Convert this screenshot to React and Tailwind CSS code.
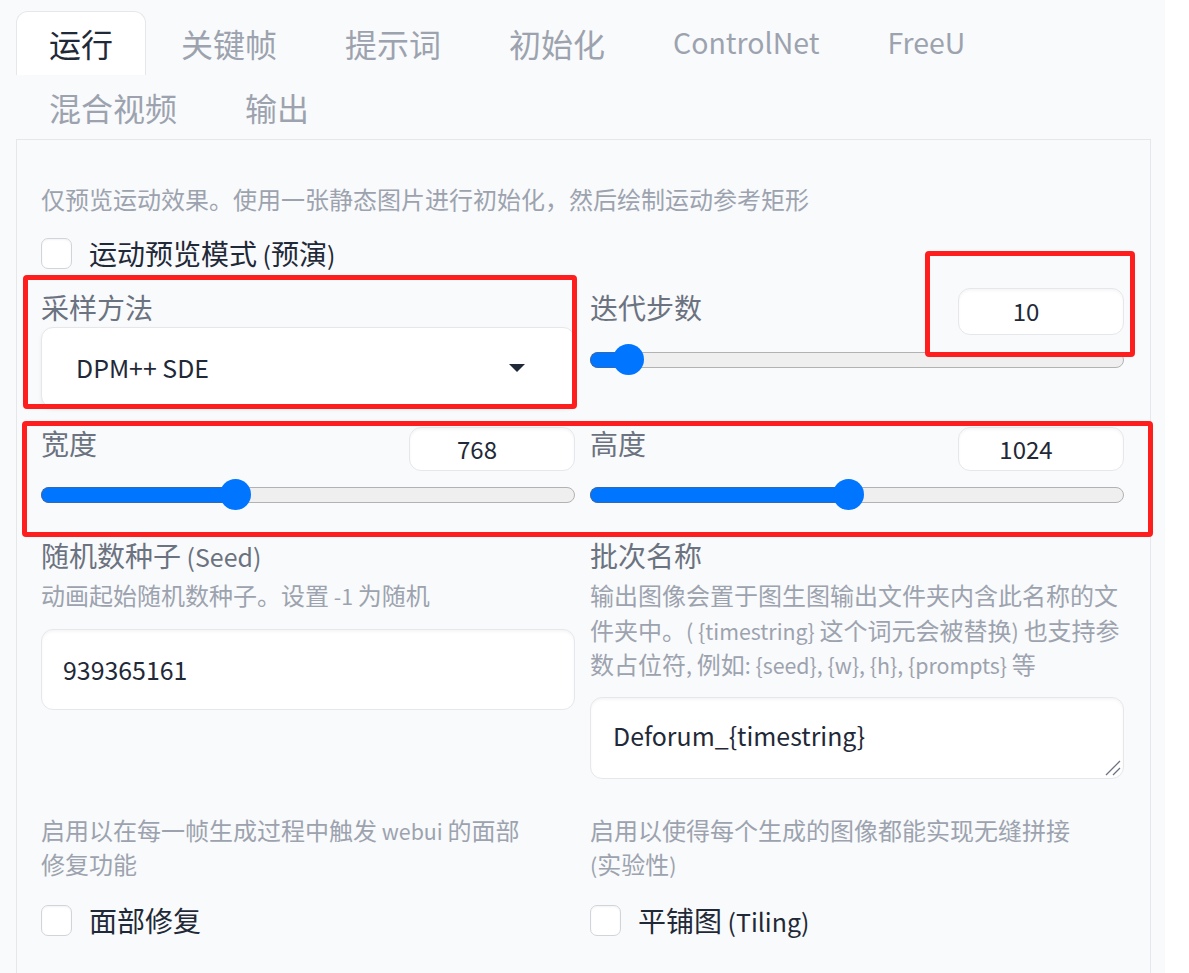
const tabs = ["运行", "关键帧", "提示词", "初始化", "ControlNet", "FreeU", "混合视频", "输出"];

// latin glyphs in Noto Sans CJK run wider than the reference, scale them down
function L({ children }) {
  return <span className="text-[0.89em] leading-none">{children}</span>;
}

function Checkbox() {
  return (
    <div className="h-[31px] w-[31px] shrink-0 rounded-[7px] border border-[#d1d5db] bg-white shadow-[inset_0_1px_2px_rgba(0,0,0,0.05)]" />
  );
}

function NumberBox({ value, h }) {
  return (
    <div
      className={`flex w-[166px] items-center justify-center rounded-[12px] border border-[#e5e7eb] bg-white pr-[30px] text-[27px] text-[#1f2937] shadow-[inset_0_2px_3px_rgba(0,0,0,0.04)] ${h}`}
    >
      <L>{value}</L>
    </div>
  );
}

function Slider({ pct }) {
  return (
    <div className="relative h-[31px]">
      <div className="absolute inset-x-0 top-[7.5px] h-[16px] rounded-full border-[1.5px] border-[#b2b2b2] bg-[#efefef]" />
      <div
        className="absolute left-0 top-[7.5px] h-[16px] rounded-l-full border-[1.5px] border-r-0 border-[#3169b5] bg-[#0075ff]"
        style={{ width: `calc(${pct} * (100% - 31px) + 15px)` }}
      />
      <div
        className="absolute top-0 h-[31px] w-[31px] rounded-full bg-[#0075ff]"
        style={{ left: `calc(${pct} * (100% - 31px))` }}
      />
    </div>
  );
}

export default function App() {
  return (
    <div className="flex min-h-[973px] bg-white font-['Noto_Sans_CJK_SC','Noto_Sans',sans-serif]">
      <div className="relative w-[1165px] bg-[#f9fafb] pl-[16px] pr-[14px] pt-[11px]">
        {/* tabs */}
        <div className="flex flex-wrap gap-x-[2px]">
          {tabs.map((t, i) => (
            <div
              key={t}
              className={
                i === 0
                  ? "flex h-[64px] items-center rounded-t-[12px] border border-b-0 border-[#e5e7eb] bg-white px-[32px] pb-[2px] text-[32px] leading-none text-[#1f2937]"
                  : "flex h-[64px] items-center border border-b-0 border-transparent px-[32px] pb-[2px] text-[32px] leading-none text-[#9ca3af]"
              }
            >
              {/^[A-Za-z]/.test(t) ? <L>{t}</L> : t}
            </div>
          ))}
        </div>

        {/* panel */}
        <div className="border border-[#e5e7eb] pb-[60px] pl-[24px] pr-[26px] pt-[42px]">
          <p className="text-[24px] leading-[34px] text-[#9ca3af]">
            仅预览运动效果。使用一张静态图片进行初始化，然后绘制运动参考矩形
          </p>

          <div className="mt-[22px] flex items-center gap-[17px]">
            <Checkbox />
            <span className="text-[28px] leading-[31px] text-[#1f2937]">
              运动预览模式<L> (</L>预演<L>)</L>
            </span>
          </div>

          {/* sampler / steps */}
          <div className="mt-[19px] grid grid-cols-2 items-start gap-x-[15px]">
            <div>
              <div className="text-[28px] leading-[38px] text-[#6b7280]">采样方法</div>
              <div className="mt-[1px] flex h-[81px] items-center justify-between rounded-[12px] border border-[#e5e7eb] bg-white pl-[34px] pr-[49px] text-[28px] text-[#1f2937] shadow-[0_2px_4px_rgba(0,0,0,0.06)]">
                <L>DPM++ SDE</L>
                <svg width="16" height="8" viewBox="0 0 16 8">
                  <path d="M0 0 L16 0 L8 8 Z" fill="#1f2937" />
                </svg>
              </div>
            </div>
            <div>
              <div className="flex items-start justify-between">
                <span className="text-[28px] leading-[38px] text-[#6b7280]">迭代步数</span>
                <NumberBox value="10" h="h-[47px]" />
              </div>
              <div className="mt-[9px]">
                <Slider pct={0.045} />
              </div>
            </div>
          </div>

          {/* width / height */}
          <div className="mt-[19px] grid grid-cols-2 items-start gap-x-[15px]">
            <div>
              <div className="flex items-start justify-between">
                <span className="text-[28px] leading-[32px] text-[#6b7280]">宽度</span>
                <NumberBox value="768" h="h-[44px]" />
              </div>
              <div className="mt-[8px]">
                <Slider pct={0.355} />
              </div>
            </div>
            <div>
              <div className="flex items-start justify-between">
                <span className="text-[28px] leading-[32px] text-[#6b7280]">高度</span>
                <NumberBox value="1024" h="h-[44px]" />
              </div>
              <div className="mt-[8px]">
                <Slider pct={0.484} />
              </div>
            </div>
          </div>

          {/* seed / batch name */}
          <div className="mt-[27px] grid grid-cols-2 items-start gap-x-[15px]">
            <div>
              <div className="text-[28px] leading-[36px] text-[#6b7280]">
                随机数种子<L> (Seed)</L>
              </div>
              <p className="mt-[5px] text-[24px] leading-[34.5px] text-[#9ca3af]">
                动画起始随机数种子。设置<L> -1 </L>为随机
              </p>
              <div className="mt-[16px] flex h-[81px] items-center rounded-[12px] border border-[#e5e7eb] bg-white pl-[21px] text-[28px] text-[#1f2937] shadow-[inset_0_2px_3px_rgba(0,0,0,0.04)]">
                <L>939365161</L>
              </div>
            </div>
            <div>
              <div className="text-[28px] leading-[36px] text-[#6b7280]">批次名称</div>
              <p className="mt-[5px] whitespace-nowrap text-[24px] leading-[34.5px] text-[#9ca3af]">
                输出图像会置于图生图输出文件夹内含此名称的文
                <br />
                件夹中。<L>( {"{timestring}"} </L>这个词元会被替换<L>) </L>也支持参
                <br />
                数占位符<L>, </L>例如<L>: {"{seed}, {w}, {h}, {prompts}"} </L>等
              </p>
              <div className="relative mt-[15px] flex h-[82px] items-center rounded-[12px] border border-[#e5e7eb] bg-white pb-[4px] pl-[22px] text-[28px] text-[#1f2937] shadow-[inset_0_2px_3px_rgba(0,0,0,0.04)]">
                <L>Deforum_{"{timestring}"}</L>
                <svg className="absolute bottom-[2px] right-[2px]" width="16" height="16" viewBox="0 0 16 16">
                  <path d="M1 15 L15 1 M8 15 L15 8" stroke="#6b7280" strokeWidth="1.3" />
                </svg>
              </div>
            </div>
          </div>

          {/* face restore / tiling */}
          <div className="mt-[34px] grid grid-cols-2 items-start gap-x-[15px]">
            <div>
              <p className="text-[24px] leading-[34px] text-[#9ca3af]">
                启用以在每一帧生成过程中触发<L> webui </L>的面部
                <br />
                修复功能
              </p>
              <div className="mt-[24px] flex items-center gap-[17px]">
                <Checkbox />
                <span className="text-[28px] leading-[31px] text-[#1f2937]">面部修复</span>
              </div>
            </div>
            <div>
              <p className="text-[24px] leading-[34px] text-[#9ca3af]">
                启用以使得每个生成的图像都能实现无缝拼接
                <br />
                <L>(</L>实验性<L>)</L>
              </p>
              <div className="mt-[24px] flex items-center gap-[17px]">
                <Checkbox />
                <span className="text-[28px] leading-[31px] text-[#1f2937]">
                  平铺图<L> (Tiling)</L>
                </span>
              </div>
            </div>
          </div>
        </div>

        {/* red annotation boxes */}
        <div className="pointer-events-none absolute left-[23px] top-[275px] h-[134px] w-[554px] rounded-[4px] border-[5px] border-[#ff1e1e]" />
        <div className="pointer-events-none absolute left-[925px] top-[251px] h-[106px] w-[210px] rounded-[4px] border-[5px] border-[#ff1e1e]" />
        <div className="pointer-events-none absolute left-[22px] top-[421px] h-[116px] w-[1131px] rounded-[4px] border-[5px] border-[#ff1e1e]" />
      </div>
    </div>
  );
}
